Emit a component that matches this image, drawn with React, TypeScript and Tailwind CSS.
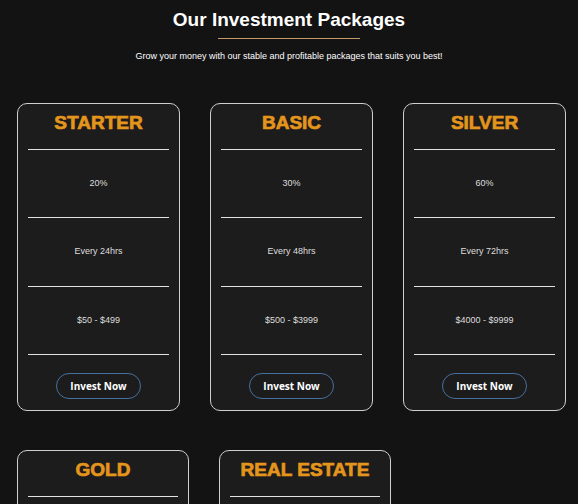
import React from "react";

type Pkg = { name: string; rate: string; period: string; range: string };

const row1: Pkg[] = [
  { name: "STARTER", rate: "20%", period: "Every 24hrs", range: "$50 - $499" },
  { name: "BASIC", rate: "30%", period: "Every 48hrs", range: "$500 - $3999" },
  { name: "SILVER", rate: "60%", period: "Every 72hrs", range: "$4000 - $9999" },
];
const row2: Pkg[] = [
  { name: "GOLD", rate: "100%", period: "Every 96hrs", range: "$10000 - $49999" },
  { name: "REAL ESTATE", rate: "150%", period: "Every 7days", range: "$50000 - Unlimited" },
];

function Card({ p, w }: { p: Pkg; w: string }) {
  return (
    <div
      className={`${w} shrink-0 rounded-[10px] border border-[#cfcfcf] bg-[#1c1c1c] px-[10px] pb-[11px] flex flex-col items-center`}
    >
      <div className="h-[45px] w-full flex justify-center pt-[9px]">
        <h3 className="text-[19px] font-bold leading-[19px] text-[#e3951c] [-webkit-text-stroke:0.7px_#e3951c] font-['Liberation_Sans',Arial,sans-serif] whitespace-nowrap">
          {p.name}
        </h3>
      </div>
      <div className="w-full h-px bg-[#e2e2e2]" />
      <div className="h-[67px] w-full flex items-center justify-center text-[9px] text-[#dedede]">{p.rate}</div>
      <div className="w-full h-px bg-[#e2e2e2]" />
      <div className="h-[68px] w-full flex items-center justify-center text-[9px] text-[#dedede]">{p.period}</div>
      <div className="w-full h-px bg-[#e2e2e2]" />
      <div className="h-[67px] w-full flex items-center justify-center text-[9px] text-[#dedede]">{p.range}</div>
      <div className="w-full h-px bg-[#e2e2e2]" />
      <button className="mt-[18px] w-[85px] h-[26px] rounded-full border-[1.5px] border-[#46709f] text-white text-[10px] font-bold font-['Open_Sans',sans-serif]">
        Invest Now
      </button>
    </div>
  );
}

export default function App() {
  return (
    <div className="w-[578px] h-[504px] overflow-hidden bg-[#131313] font-['Liberation_Sans',Arial,sans-serif]">
      <div className="flex flex-col items-center pt-[8px]">
        <h2 className="text-[19px] font-bold text-white leading-[24px]">Our Investment Packages</h2>
        <div className="mt-[6px] w-[142px] h-px bg-[#c49a66]" />
        <p className="mt-[11px] text-[9px] leading-[12px] text-white">
          Grow your money with our stable and profitable packages that suits you best!
        </p>
      </div>
      <div className="mt-[41px] pl-[17px] flex gap-[30px]">
        {row1.map((p) => (
          <Card key={p.name} p={p} w="w-[163px]" />
        ))}
      </div>
      <div className="mt-[39px] pl-[17px] flex gap-[30px]">
        {row2.map((p) => (
          <Card key={p.name} p={p} w="w-[172px]" />
        ))}
      </div>
    </div>
  );
}
